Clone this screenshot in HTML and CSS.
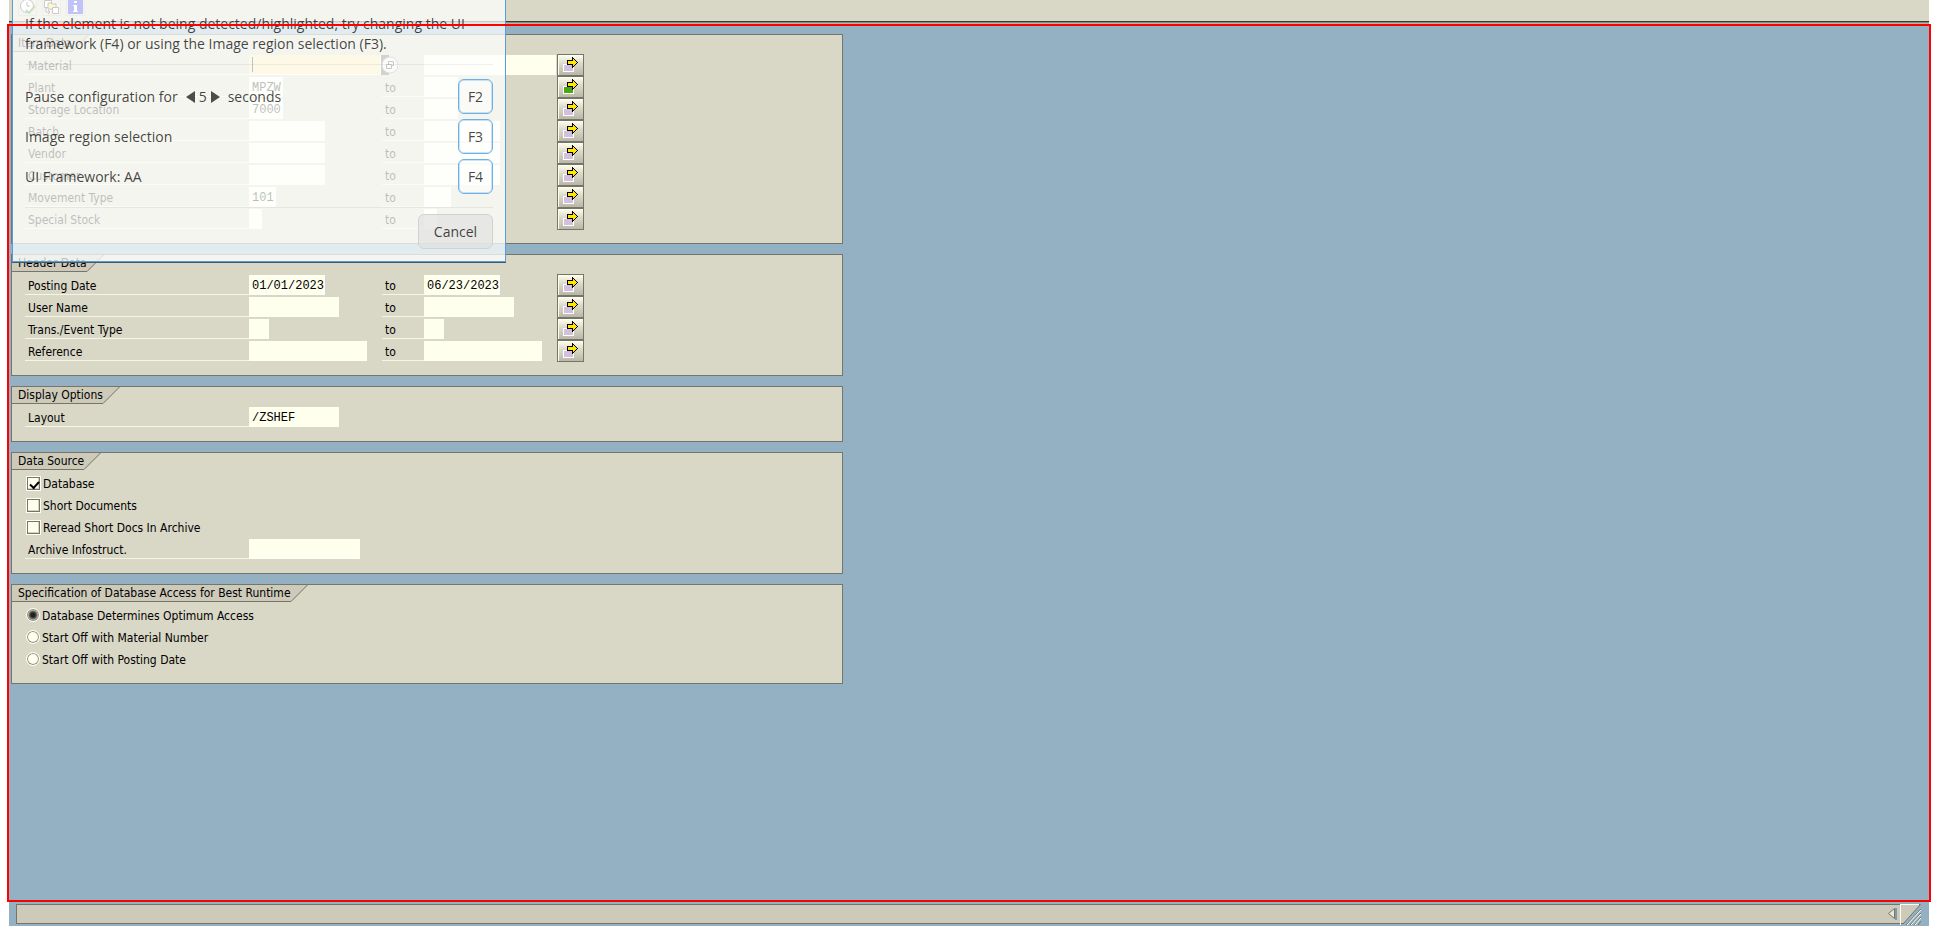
FILE: index.html
```html
<!DOCTYPE html>
<html lang="en">
<head>
<meta charset="utf-8">
<title>Material Documents</title>
<link rel="stylesheet" href="styles.css">
</head>
<body>
<svg class="defs" aria-hidden="true">
  <symbol id="multi" viewBox="0 0 25 20">
    <path d="M5 9h11v8H5z" fill="#fff"/><path d="M6 10h9v6H6z"/>
    <path d="M9 5h5V2h1v1h1v1h1v1h1v1h1v1h1v1h-1v1h-1v1h-1v1h-1v1h-1v1h-1v-3H9z" fill="#000"/>
    <path d="M10 6h5V4h1v1h1v1h1v1h1v1h-1v1h-1v1h-1v1h-1V9h-5z" fill="#ffe600"/>
  </symbol>
  <symbol id="slant" viewBox="0 0 17 17">
    <path d="M0 0h17L0 17z" fill="#cdcaba"/><path d="M0 16.5L16.500 0" stroke="#77756a" fill="none"/>
  </symbol>
</svg>
<div class="window">
  <header class="toolbar">
    <button class="tool" aria-label="Execute"><svg viewBox="0 0 17 17"><circle cx="8" cy="8" r="6.500" fill="#fff" stroke="#333"/><path d="M8 4v4h3" fill="none" stroke="#333"/><path d="M7 12l3 3 6-7" fill="none" stroke="#3a8c0e" stroke-width="2"/></svg></button>
    <button class="tool" aria-label="Get variant"><svg viewBox="0 0 17 17"><path d="M1.500 2.500h7v7h-7z" fill="#fff" stroke="#333"/><path d="M5 5h3l1 1h4v5H5z" fill="#fce94f" stroke="#333"/><path d="M9.500 9.500h6v6h-6zM3 10v4h4M5 12l2 2-2 2" fill="#fff" stroke="#333"/></svg></button>
    <button class="tool" aria-label="Information"><svg viewBox="0 0 17 17"><path d="M1 1h15v15H1z" fill="#1515e8"/><path d="M7 3h3v2H7zM6 7h4v6h1v1H6v-1h1V8H6z" fill="#fff"/></svg></button>
  </header>

  <main class="screen">
    <section class="group">
      <h2 class="tab"><span>Item Data</span><svg><use href="#slant"/></svg></h2>
      <div class="row"><label for="a1">Material</label><div class="from"><input id="a1" class="w132 active"><button class="help" aria-label="Possible entries"><svg viewBox="0 0 17 20"><circle cx="9" cy="10" r="8" fill="#f4f4f0" stroke="#888"/><path d="M5.500 9.500h5v4h-5zM7.500 9V6.500h5v4H11" fill="none" stroke="#333"/></svg></button></div><div class="to"><input class="w132" aria-label="Material to"></div><button class="multi" aria-label="Multiple selection"><svg><use href="#multi"/></svg></button></div>
      <div class="row"><label for="a2">Plant</label><div class="from"><input id="a2" class="w34" value="MPZW"></div><label class="sep" for="b2">to</label><div class="to"><input id="b2" class="w34"></div><button class="multi filled" aria-label="Multiple selection"><svg><use href="#multi"/></svg></button></div>
      <div class="row"><label for="a3">Storage Location</label><div class="from"><input id="a3" class="w34" value="7000"></div><label class="sep" for="b3">to</label><div class="to"><input id="b3" class="w34"></div><button class="multi" aria-label="Multiple selection"><svg><use href="#multi"/></svg></button></div>
      <div class="row"><label for="a4">Batch</label><div class="from"><input id="a4" class="w76"></div><label class="sep" for="b4">to</label><div class="to"><input id="b4" class="w76"></div><button class="multi" aria-label="Multiple selection"><svg><use href="#multi"/></svg></button></div>
      <div class="row"><label for="a5">Vendor</label><div class="from"><input id="a5" class="w76"></div><label class="sep" for="b5">to</label><div class="to"><input id="b5" class="w76"></div><button class="multi" aria-label="Multiple selection"><svg><use href="#multi"/></svg></button></div>
      <div class="row"><label for="a6">Customer</label><div class="from"><input id="a6" class="w76"></div><label class="sep" for="b6">to</label><div class="to"><input id="b6" class="w76"></div><button class="multi" aria-label="Multiple selection"><svg><use href="#multi"/></svg></button></div>
      <div class="row"><label for="a7">Movement Type</label><div class="from"><input id="a7" class="w27" value="101"></div><label class="sep" for="b7">to</label><div class="to"><input id="b7" class="w27"></div><button class="multi" aria-label="Multiple selection"><svg><use href="#multi"/></svg></button></div>
      <div class="row"><label for="a8">Special Stock</label><div class="from"><input id="a8" class="w13"></div><label class="sep" for="b8">to</label><div class="to"><input id="b8" class="w13"></div><button class="multi" aria-label="Multiple selection"><svg><use href="#multi"/></svg></button></div>
    </section>

    <section class="group">
      <h2 class="tab"><span>Header Data</span><svg><use href="#slant"/></svg></h2>
      <div class="row"><label for="c1">Posting Date</label><div class="from"><input id="c1" class="w76" value="01/01/2023"></div><label class="sep" for="d1">to</label><div class="to"><input id="d1" class="w76" value="06/23/2023"></div><button class="multi" aria-label="Multiple selection"><svg><use href="#multi"/></svg></button></div>
      <div class="row"><label for="c2">User Name</label><div class="from"><input id="c2" class="w90"></div><label class="sep" for="d2">to</label><div class="to"><input id="d2" class="w90"></div><button class="multi" aria-label="Multiple selection"><svg><use href="#multi"/></svg></button></div>
      <div class="row"><label for="c3">Trans./Event Type</label><div class="from"><input id="c3" class="w20"></div><label class="sep" for="d3">to</label><div class="to"><input id="d3" class="w20"></div><button class="multi" aria-label="Multiple selection"><svg><use href="#multi"/></svg></button></div>
      <div class="row"><label for="c4">Reference</label><div class="from"><input id="c4" class="w118"></div><label class="sep" for="d4">to</label><div class="to"><input id="d4" class="w118"></div><button class="multi" aria-label="Multiple selection"><svg><use href="#multi"/></svg></button></div>
    </section>

    <section class="group">
      <h2 class="tab"><span>Display Options</span><svg><use href="#slant"/></svg></h2>
      <div class="row"><label for="e1">Layout</label><div class="from"><input id="e1" class="w90" value="/ZSHEF"></div></div>
    </section>

    <section class="group">
      <h2 class="tab"><span>Data Source</span><svg><use href="#slant"/></svg></h2>
      <label class="choice"><input type="checkbox" checked><span>Database</span></label>
      <label class="choice"><input type="checkbox"><span>Short Documents</span></label>
      <label class="choice"><input type="checkbox"><span>Reread Short Docs In Archive</span></label>
      <div class="row"><label for="f1">Archive Infostruct.</label><div class="from"><input id="f1" class="w111"></div></div>
    </section>

    <section class="group">
      <h2 class="tab"><span>Specification of Database Access for Best Runtime</span><svg><use href="#slant"/></svg></h2>
      <label class="choice"><input type="radio" name="access" checked><span>Database Determines Optimum Access</span></label>
      <label class="choice"><input type="radio" name="access"><span>Start Off with Material Number</span></label>
      <label class="choice"><input type="radio" name="access"><span>Start Off with Posting Date</span></label>
    </section>
  </main>

  <footer class="status">
    <div class="bar">
      <button class="collapse" aria-label="Collapse"><svg viewBox="0 0 10 14"><path d="M8 1h2v12H8z" fill="#7f9aab"/><path d="M7.500 1.500v10L1.500 6.500z" fill="#e9e7da" stroke="#77756a"/></svg></button>
      <svg class="grip" viewBox="0 0 21 21"><path d="M21 0v21H2z" fill="#94b1c3"/><path d="M.5 0v21M0 .5h19" stroke="#fffff0"/><path d="M3 20L20 1" stroke="#77756a"/><path d="M6 21L21 5M10 21L21 9M14 21l7-8M18 21l3-4" stroke="#77756a"/><path d="M7 21L21 6M11 21l10-11M15 21l6-7" stroke="#fffff0"/></svg>
    </div>
  </footer>
</div>

<aside class="hint">
  <p>If the element is not being detected/highlighted, try changing the UI framework (F4) or using the Image region selection (F3).</p>
  <hr>
  <div class="keys">
    <div class="key"><span class="delay"><span>Pause configuration for</span><span class="stepper"><svg viewBox="0 0 9 12"><path d="M9 0v12L0 6z"/></svg>5<svg viewBox="0 0 9 12"><path d="M0 0v12l9-6z"/></svg></span><span>seconds</span></span><button>F2</button></div>
    <div class="key"><span>Image region selection</span><button>F3</button></div>
    <div class="key"><span>UI Framework: AA</span><button>F4</button></div>
  </div>
  <hr>
  <button class="cancel">Cancel</button>
</aside>
</body>
</html>
```
FILE: styles.css
```css
* { box-sizing: border-box; }

body {
  margin: 0;
  background: #fff;
  color: #000;
  font: 12px/16px "DejaVu Sans Condensed", "DejaVu Sans", sans-serif;
}

.defs { position: absolute; width: 0; height: 0; }
svg { display: block; }
button { padding: 0; font: inherit; color: inherit; }

.window {
  display: flex;
  flex-direction: column;
  min-height: 100vh;
  margin: 0 9px;
  background: #94b1c3;
}

.toolbar {
  display: flex;
  gap: 5px;
  height: 24px;
  padding-left: 9px;
  background: linear-gradient(#d9d7c6 21px, #3c3c36 21px 22px, #8a8980 22px 23px, #b5b4a8 23px);
}
.tool {
  width: 19px;
  height: 19px;
  margin-top: -3px;
  border: 1px solid #c2c0b0;
  background: #dddbcb;
}
.tool svg { width: 17px; height: 17px; }

.screen {
  position: relative;
  flex: 1;
  display: flex;
  flex-direction: column;
  gap: 10px;
  padding: 10px 2px;
}
.screen::after {
  content: "";
  position: absolute;
  inset: 0 -2px;
  z-index: 3;
  border: 2px solid #f00;
  pointer-events: none;
}

.group {
  max-width: 832px;
  padding: 0 0 13px 13px;
  border: 1px solid #77756a;
  background: #d9d7c6;
}

.tab {
  display: flex;
  height: 17px;
  margin: 0 0 2px -13px;
  font: inherit;
}
.tab span {
  padding-left: 6px;
  border-bottom: 1px solid #77756a;
  background: #cdcaba;
}
.tab svg { width: 17px; height: 17px; }

.row {
  display: grid;
  grid-template-columns: 224px 133px 42px 133px 27px;
  align-items: center;
  height: 22px;
}
.row label {
  height: 20px;
  padding: 3px 3px 0;
  border-bottom: 1px solid #f6f4e4;
}
.from { display: flex; grid-column: 2; }
.to { display: flex; grid-column: 4; }
.row input {
  height: 20px;
  padding: 2px 0 0 3px;
  border: 1px solid #fffff8;
  border-width: 0 1px 1px 0;
  background: #ffffee;
  font: 12px "Liberation Mono", monospace;
  outline: 0;
}
.row .active { background: linear-gradient(#0a1a60, #0a1a60) 3px 2px / 1px 15px no-repeat #ffe9a4; }
.w13 { width: 13px; }
.w20 { width: 20px; }
.w27 { width: 27px; }
.w34 { width: 34px; }
.w76 { width: 76px; }
.w90 { width: 90px; }
.w111 { width: 111px; }
.w118 { width: 118px; }
.w132 { width: 132px; }

.help {
  flex: none;
  width: 17px;
  height: 20px;
  border: 0;
  background: linear-gradient(90deg, #55544c 50%, transparent 50%);
}
.help svg { width: 17px; height: 20px; }

.multi {
  grid-column: 5;
  width: 27px;
  height: 22px;
  border: 1px solid #77756a;
  background: linear-gradient(#fffff0, #dddbcc 40%, #b9b7a8);
  box-shadow: inset 1px 1px #fffff0;
}
.multi svg { width: 25px; height: 20px; shape-rendering: crispEdges; fill: #d2c0de; }
.multi.filled svg { fill: #4ca614; }

.choice {
  display: flex;
  align-items: center;
  gap: 2px;
  width: max-content;
  height: 22px;
  padding-left: 1px;
}
.choice span { padding-top: 2px; }
.choice input {
  appearance: none;
  width: 15px;
  height: 15px;
  margin: 0;
}
.choice [type="checkbox"] {
  border: 1px solid #fffff8;
  background: #ffffee;
  box-shadow: inset 1px 1px #77756a, inset -1px -1px #77756a, inset -2px -2px #d4d2c2;
}
.choice [type="checkbox"]:checked::after {
  content: "";
  display: block;
  width: 7px;
  height: 4px;
  margin: 4px 0 0 3px;
  border: solid #000;
  border-width: 0 0 2px 2px;
  transform: rotate(-48deg);
}
.choice [type="radio"] {
  width: 14px;
  height: 14px;
  border: 1px solid #fffff8;
  border-radius: 50%;
  background: #ffffee;
  box-shadow: inset 0 0 0 1px #8a887c;
}
.choice [type="radio"]:checked {
  background: radial-gradient(circle, #222 0 2px, #77756a 4px, #d9d7c6 5px);
}

.status {
  height: 24px;
  padding: 2px 8px 2px 7px;
}
.bar {
  display: flex;
  align-items: center;
  justify-content: flex-end;
  height: 20px;
  border: 1px solid #77756a;
  border-right: 0;
  background: #cdcaba;
}
.collapse { width: 10px; height: 14px; margin-right: 3px; border: 0; background: none; }
.collapse svg { width: 10px; height: 14px; }
.grip { width: 21px; height: 21px; }

.hint {
  position: absolute;
  top: 0;
  left: 12px;
  z-index: 2;
  width: 494px;
  padding: 9px 12px 12px;
  border: solid #5a9bd8;
  border-width: 0 1px 1px;
  background: rgba(253, 255, 254, .74);
  box-shadow: 0 1px #45596b;
  color: rgba(0, 0, 0, .74);
  font: 14px/20px "Open Sans", "Noto Sans", sans-serif;
}
.hint p { margin: 5px 0 10px; }
.hint hr { height: 1px; margin: 0; border: 0; background: rgba(0, 0, 0, .06); }
.keys {
  display: flex;
  flex-direction: column;
  gap: 5px;
  padding: 14px 0 13px;
}
.key { display: flex; align-items: center; justify-content: space-between; }
.delay { display: flex; gap: 8px; align-items: center; }
.stepper { display: flex; gap: 4px; align-items: center; }
.stepper svg { width: 9px; height: 12px; fill: #4c4c48; }
.hint button {
  width: 35px;
  height: 35px;
  border: 1px solid #6bb0e8;
  border-radius: 6px;
  background: rgba(255, 255, 255, .5);
  box-shadow: inset 0 0 0 1px rgba(107, 176, 232, .35);
}
.hint .cancel {
  display: block;
  width: 75px;
  margin: 6px 0 0 auto;
  border-color: #d2d2d0;
  background: rgba(225, 225, 225, .7);
  box-shadow: none;
}
```
